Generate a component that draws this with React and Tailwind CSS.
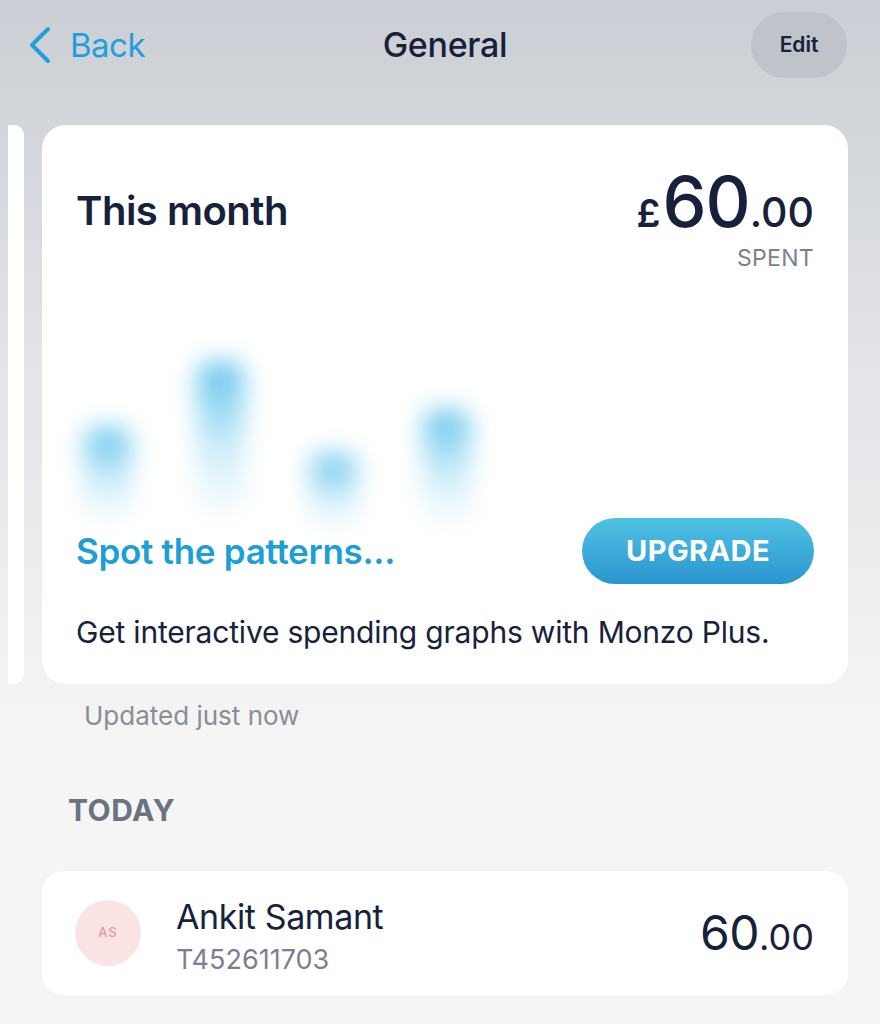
import React from 'react';

const bars = [
  { h: 'h-[96px]', mb: '-mb-[6px]' },
  { h: 'h-[160px]', mb: '-mb-[4px]' },
  { h: 'h-[76px]', mb: '-mb-[12px]' },
  { h: 'h-[118px]', mb: '-mb-[10px]' },
];

export default function App() {
  return (
    <div className="min-h-[1024px] w-[880px] bg-[linear-gradient(to_bottom,#cbced4_0px,#e3e5e8_380px,#f5f5f6_740px,#f5f5f6_100%)] font-['Inter',sans-serif] text-[#17223a] overflow-hidden">
      {/* Nav bar */}
      <div className="h-[90px] flex items-center justify-between pl-[27px] pr-[33px] relative">
        <div className="flex items-center gap-[18px] text-[#1ea0db]">
          <svg width="25" height="38" viewBox="0 0 25 38" fill="none">
            <path d="M21 3 L5 19 L21 35" stroke="#1ea0db" strokeWidth="4" strokeLinecap="round" strokeLinejoin="round" />
          </svg>
          <span className="text-[33px] leading-none tracking-[-0.5px]">Back</span>
        </div>
        <div className="absolute left-0 right-0 text-center pointer-events-none pl-[10px]">
          <span className="text-[34px] font-medium leading-none tracking-[-0.3px]">General</span>
        </div>
        <div className="h-[66px] w-[96px] rounded-full bg-[#bfc3ca] flex items-center justify-center text-[21px] font-semibold">
          Edit
        </div>
      </div>

      {/* Summary card with peeking card on left */}
      <div className="mt-[35px] flex gap-[18px] items-stretch">
        <div className="w-[24px] pl-[8px]">
          <div className="h-full bg-white rounded-r-[10px]" />
        </div>
        <div className="w-[806px] bg-white rounded-[24px] pt-[56px] pb-[34px] px-[34px]">
          <div className="flex justify-between items-start">
            <div className="text-[40px] font-semibold leading-[60px] tracking-[-0.5px]">This month</div>
            <div className="flex flex-col items-end">
              <div className="h-[62px] -mt-[14px] mb-[14px] flex items-baseline leading-none">
                <span className="text-[38px] font-semibold mr-[2px]">£</span>
                <span className="text-[70px] font-medium tracking-[-1px]">60</span>
                <span className="text-[41px] font-medium">.00</span>
              </div>
              <div className="text-[23px] leading-[30px] text-[#7b8190] tracking-[0.3px]">SPENT</div>
            </div>
          </div>

          {/* blurred chart */}
          <div className="h-[245px] flex items-end gap-[66px] pl-[8px]">
            {bars.map((b, i) => (
              <div
                key={i}
                className={`w-[47px] ${b.h} ${b.mb} rounded-[14px] bg-[linear-gradient(to_bottom,#62c4ec,rgba(120,205,240,0.35)_55%,rgba(160,220,245,0))] blur-[12px]`}
              />
            ))}
          </div>

          <div className="flex items-center justify-between">
            <span className="text-[35px] font-semibold text-[#1b9fd6] tracking-[-0.3px]">Spot the patterns...</span>
            <div className="h-[66px] w-[232px] rounded-full bg-[linear-gradient(to_bottom,#4fc2e3,#2c95cf)] flex items-center justify-center text-white text-[29px] font-bold tracking-[0.4px]">
              UPGRADE
            </div>
          </div>

          <div className="mt-[30px] text-[30px] leading-[36px] tracking-[-0.2px]">
            Get interactive spending graphs with Monzo Plus.
          </div>
        </div>
      </div>

      <div className="mt-[17px] pl-[84px] text-[26px] leading-[30px] text-[#8a8d94]">Updated just now</div>

      <div className="mt-[62px] pl-[68px] text-[30px] leading-[34px] font-bold text-[#6b7280] tracking-[0.5px]">TODAY</div>

      <div className="mt-[44px] ml-[42px] w-[806px] h-[124px] bg-white rounded-[22px] flex items-center pl-[33px] pr-[34px]">
        <div className="w-[66px] h-[66px] rounded-full bg-[#fbe4e4] flex items-center justify-center text-[13px] font-medium text-[#e49a9c] tracking-[1px]">
          AS
        </div>
        <div className="ml-[35px] flex-1 pt-[8px]">
          <div className="text-[34px] leading-[40px] tracking-[-0.4px]">Ankit Samant</div>
          <div className="mt-[6px] text-[27px] leading-[34px] text-[#7b8190]">T452611703</div>
        </div>
        <div className="flex items-baseline leading-none">
          <span className="text-[48px] tracking-[-0.5px]">60</span>
          <span className="text-[36px]">.00</span>
        </div>
      </div>
    </div>
  );
}
